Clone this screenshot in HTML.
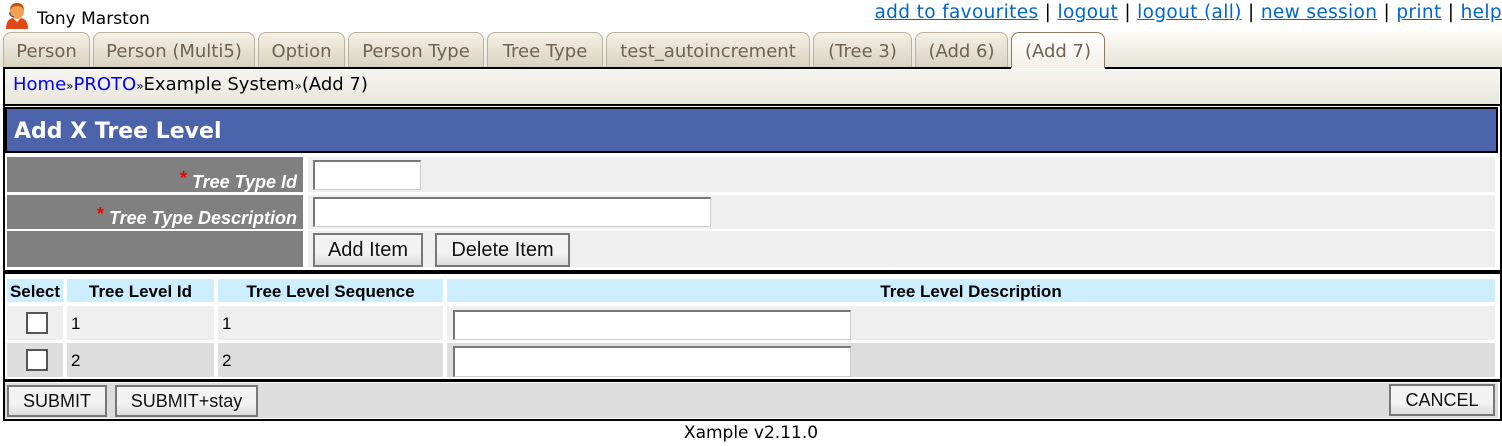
<!DOCTYPE html>
<html><head><style>
*{margin:0;padding:0;box-sizing:border-box}
body{width:1502px;height:446px;background:#fff;position:relative;overflow:hidden;font-family:"DejaVu Sans","Liberation Sans",sans-serif}
.a{position:absolute}
.tab{position:absolute;top:32px;height:35px;border:1px solid #b8b0a0;border-bottom:none;border-radius:8px 8px 0 0;background:linear-gradient(#f4f0e4,#d8d2c0);color:#6f6252;font-size:18px;line-height:37px;text-align:center}
.lnk{color:#0066cc;text-decoration:underline}
.lbl{position:absolute;left:7px;width:296px;background:#808080;color:#fff;font:italic bold 18px "Liberation Sans",sans-serif;text-align:right;padding-right:6px}
.lbl b{color:#e00;font-style:normal;vertical-align:4px}
.val{position:absolute;left:308px;width:1187px;background:#efefef}
.inp{position:absolute;background:#fff;border:1px solid #ccc;border-top:2px solid #777;border-left:2px solid #777}
.btn{position:absolute;background:linear-gradient(#f2f2f2 60%,#ddd);border:2px solid #777;font:20px "Liberation Sans",Arial,sans-serif;color:#111;text-align:center}
.th{position:absolute;top:279px;height:23px;background:#cceeff;font:bold 17px "Liberation Sans",Arial,sans-serif;line-height:25px;text-align:center}
.td{position:absolute;height:34px;font:17px "Liberation Sans",Arial,sans-serif;line-height:36px;padding-left:4px}
.cb{position:absolute;left:26px;width:22px;height:22px;background:#fff;border:2px solid #555}
.r{font-size:12px}
</style></head><body>
<svg class="a" style="left:5px;top:2px" width="24" height="27" viewBox="0 0 24 27"><ellipse cx="12" cy="9" rx="7" ry="8" fill="#f0a050"/><path d="M5 8 Q5 1 12 1 Q19 1 19 8 Q17 4 12 4 Q7 4 5 8Z" fill="#c85010"/><path d="M1 27 Q1 17 8 16 L12 20 L16 16 Q23 17 23 27Z" fill="#e04818"/><path d="M5 10 Q4 14 9 15" stroke="#333" fill="none"/></svg>
<div class="a" style="left:37px;top:9px;font-size:17px;color:#000">Tony Marston</div>
<div class="a" style="right:0;top:2px;font-size:18.5px;color:#000;white-space:nowrap;letter-spacing:0.35px"><span class="lnk">add to favourites</span> | <span class="lnk">logout</span> | <span class="lnk">logout (all)</span> | <span class="lnk">new session</span> | <span class="lnk">print</span> | <span class="lnk">help</span></div>
<div class="a" style="left:0;top:32px;width:1502px;height:35px;background:linear-gradient(#fbfbf6,#e6e4d8)"></div>
<div class="tab" style="left:3px;width:87px">Person</div>
<div class="tab" style="left:93px;width:162px">Person (Multi5)</div>
<div class="tab" style="left:258px;width:87px">Option</div>
<div class="tab" style="left:348px;width:136px">Person Type</div>
<div class="tab" style="left:487px;width:116px">Tree Type</div>
<div class="tab" style="left:606px;width:204px">test_autoincrement</div>
<div class="tab" style="left:813px;width:99px">(Tree 3)</div>
<div class="tab" style="left:915px;width:93px">(Add 6)</div>
<div class="tab" style="left:1011px;width:94px;height:36px;background:linear-gradient(#fff,#f2f0e8);border-color:#8a7a60">(Add 7)</div>
<div class="a" style="left:3px;top:67px;width:1499px;height:354px;border:2px solid #000;border-top:none"></div>
<div class="a" style="left:3px;top:67px;width:1008px;height:2px;background:#000"></div>
<div class="a" style="left:1105px;top:67px;width:397px;height:2px;background:#000"></div>
<div class="a" style="left:5px;top:69px;width:1494px;height:35px;background:linear-gradient(#f6f6f0,#e8e6dc);font-size:18px;line-height:32px;padding-left:8px;color:#000;white-space:nowrap"><span style="color:#00f">Home</span><span class="r">»</span><span style="color:#00f">PROTO</span><span class="r">»</span>Example System<span class="r">»</span>(Add 7)</div>
<div class="a" style="left:3px;top:104px;width:1497px;height:2px;background:#000"></div>
<div class="a" style="left:5px;top:107px;width:1493px;height:46px;background:#4a63ab;border:2px solid #000;color:#fff;font:bold 22px 'DejaVu Sans',sans-serif;line-height:46px;padding-left:7px">Add X Tree Level</div>
<div class="lbl" style="top:157px;height:35px;line-height:42px"><b>*</b> Tree Type Id</div>
<div class="val" style="top:157px;height:35px"></div>
<div class="inp" style="left:313px;top:160px;width:108px;height:30px"></div>
<div class="lbl" style="top:195px;height:34px;line-height:38px"><b>*</b> Tree Type Description</div>
<div class="val" style="top:195px;height:34px"></div>
<div class="inp" style="left:313px;top:197px;width:398px;height:30px"></div>
<div class="lbl" style="top:231px;height:36px"></div>
<div class="val" style="top:231px;height:36px"></div>
<div class="btn" style="left:313px;top:233px;width:110px;height:34px;line-height:30px">Add Item</div>
<div class="btn" style="left:435px;top:233px;width:135px;height:34px;line-height:30px">Delete Item</div>
<div class="a" style="left:3px;top:270px;width:1497px;height:4px;background:#000"></div>
<div class="th" style="left:7px;width:56px">Select</div>
<div class="th" style="left:67px;width:147px">Tree Level Id</div>
<div class="th" style="left:218px;width:225px">Tree Level Sequence</div>
<div class="th" style="left:447px;width:1048px">Tree Level Description</div>
<div class="td" style="left:7px;top:306px;width:56px;background:#efefef"></div>
<div class="td" style="left:67px;top:306px;width:147px;background:#efefef">1</div>
<div class="td" style="left:218px;top:306px;width:225px;background:#efefef">1</div>
<div class="td" style="left:447px;top:306px;width:1048px;background:#efefef"></div>
<div class="cb" style="top:312px"></div>
<div class="inp" style="left:453px;top:310px;width:398px;height:30px"></div>
<div class="td" style="left:7px;top:343px;width:56px;background:#ddd"></div>
<div class="td" style="left:67px;top:343px;width:147px;background:#ddd">2</div>
<div class="td" style="left:218px;top:343px;width:225px;background:#ddd">2</div>
<div class="td" style="left:447px;top:343px;width:1048px;background:#ddd"></div>
<div class="cb" style="top:349px"></div>
<div class="inp" style="left:453px;top:346px;width:398px;height:31px"></div>
<div class="a" style="left:3px;top:379px;width:1497px;height:3px;background:#000"></div>
<div class="a" style="left:5px;top:383px;width:1493px;height:35px;background:#ddd"></div>
<div class="btn" style="left:7px;top:385px;width:100px;height:32px;line-height:28px;font-size:18px">SUBMIT</div>
<div class="btn" style="left:115px;top:385px;width:143px;height:32px;line-height:28px;font-size:18px">SUBMIT+stay</div>
<div class="btn" style="left:1389px;top:384px;width:106px;height:32px;line-height:28px;font-size:18px">CANCEL</div>
<div class="a" style="left:0;top:423px;width:1502px;text-align:center;font-size:17px;color:#000">Xample v2.11.0</div>
</body></html>
